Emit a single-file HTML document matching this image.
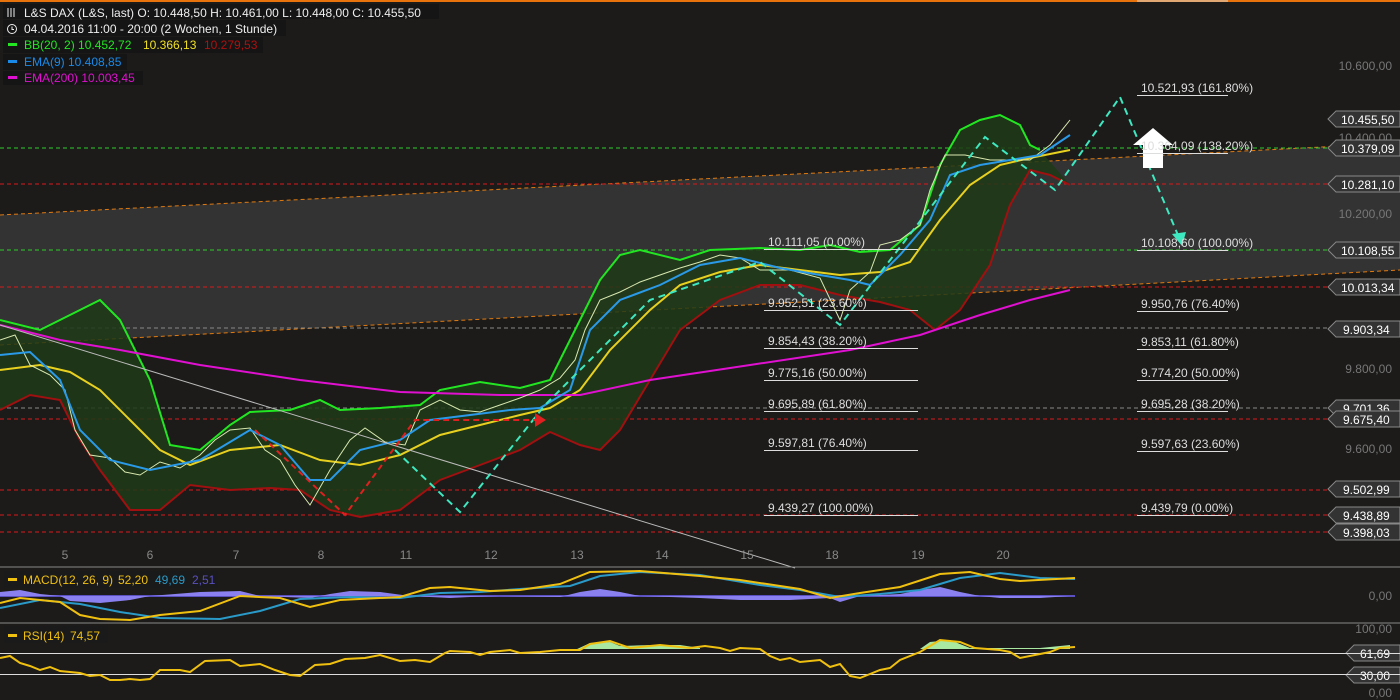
<!DOCTYPE html>
<html><head><meta charset="utf-8"><style>
body{margin:0;background:#1c1b1a;width:1400px;height:700px;overflow:hidden;font-family:"Liberation Sans",sans-serif}
svg{position:absolute;left:0;top:0}
text{font-family:"Liberation Sans",sans-serif;font-size:12px}
</style></head><body>
<svg width="1400" height="700" viewBox="0 0 1400 700">
<rect width="1400" height="700" fill="#1c1b1a"/>
<rect x="0" y="0" width="1400" height="2" fill="#e8720c"/>
<polygon points="0,215 1400,143 1400,270 0,345" fill="#333"/>
<line x1="0" y1="215" x2="1400" y2="143" stroke="#e07a10" stroke-dasharray="4,3"/>
<line x1="0" y1="345" x2="1400" y2="270" stroke="#e07a10" stroke-dasharray="4,3"/>
<g stroke-dasharray="4,3" stroke-width="1">
<line x1="0" y1="148" x2="1328" y2="148" stroke="#2ecc2e"/>
<line x1="0" y1="184" x2="1328" y2="184" stroke="#d81a1a"/>
<line x1="0" y1="250" x2="1328" y2="250" stroke="#2ecc2e"/>
<line x1="0" y1="287" x2="1328" y2="287" stroke="#d81a1a"/>
<line x1="0" y1="328" x2="1328" y2="328" stroke="#888"/>
<line x1="0" y1="408" x2="1328" y2="408" stroke="#888"/>
<line x1="0" y1="419" x2="1328" y2="419" stroke="#d81a1a"/>
<line x1="0" y1="490" x2="1328" y2="490" stroke="#d81a1a"/>
<line x1="0" y1="515" x2="1328" y2="515" stroke="#d81a1a"/>
<line x1="0" y1="532" x2="1328" y2="532" stroke="#d81a1a"/>
</g>
<polygon fill="#1f3a18" fill-opacity="0.85" points="0,320 40,330 70,315 100,300 120,320 150,380 170,445 200,450 230,425 250,412 290,410 320,400 340,410 380,408 420,405 440,390 480,382 520,388 550,380 580,320 600,280 620,255 640,250 680,260 710,250 760,248 800,250 830,245 860,252 890,250 920,225 940,165 960,130 980,120 1000,115 1020,125 1030,145 1040,150 1070,185 1050,175 1030,170 1010,205 990,265 960,310 935,330 910,310 880,302 840,295 800,285 760,285 720,300 680,330 650,380 620,430 600,450 580,445 550,432 520,450 480,465 440,480 400,510 360,517 330,510 300,490 270,488 230,490 190,485 160,510 130,510 100,470 80,440 60,400 30,395 0,410"/>
<polyline fill="none" stroke="#22e622" stroke-width="2" points="0,320 40,330 70,315 100,300 120,320 150,380 170,445 200,450 230,425 250,412 290,410 320,400 340,410 380,408 420,405 440,390 480,382 520,388 550,380 580,320 600,280 620,255 640,250 680,260 710,250 760,248 800,250 830,245 860,252 890,250 920,225 940,165 960,130 980,120 1000,115 1020,125 1030,145 1040,150"/>
<polyline fill="none" stroke="#a01010" stroke-width="2" points="0,410 30,395 60,400 80,440 100,470 130,510 160,510 190,485 230,490 270,488 300,490 330,510 360,517 400,510 440,480 480,465 520,450 550,432 580,445 600,450 620,430 650,380 680,330 720,300 760,285 800,285 840,295 880,302 910,310 935,330 960,310 990,265 1010,205 1030,170 1050,175 1070,185"/>
<polyline fill="none" stroke="#e8d020" stroke-width="2" points="0,370 40,365 70,372 100,390 130,420 160,450 190,465 230,450 280,445 320,460 360,465 400,455 440,435 480,425 520,415 550,408 580,390 610,350 650,310 680,285 720,272 760,265 800,270 840,275 880,272 910,262 940,220 970,185 1000,165 1030,158 1070,150"/>
<polyline fill="none" stroke="#e010d0" stroke-width="2" points="0,325 60,340 120,350 200,365 300,380 400,392 500,395 580,395 650,380 750,365 850,350 920,335 980,315 1030,300 1070,290"/>
<polyline fill="none" stroke="#d8e8b0" stroke-width="1" points="0,340 15,335 30,365 50,375 65,390 75,430 90,455 110,458 125,472 140,475 160,462 180,468 200,455 215,440 230,430 250,428 265,450 280,460 295,485 310,505 330,470 350,440 365,428 385,442 405,445 420,410 440,400 460,410 480,412 500,405 520,398 540,390 560,378 575,360 585,330 600,300 620,292 640,282 660,275 680,268 700,262 720,255 740,258 760,270 790,270 820,278 840,320 850,290 870,272 880,245 900,240 920,225 930,190 945,155 965,155 990,160 1010,160 1030,160 1050,145 1070,120"/>
<polyline fill="none" stroke="#2a9ae8" stroke-width="2" points="0,355 30,352 60,380 80,430 110,460 150,470 200,460 250,430 280,445 310,480 330,480 360,450 400,440 430,420 470,415 510,410 540,408 570,390 590,330 620,300 660,285 700,265 740,258 780,268 820,275 850,280 870,285 900,255 930,220 950,175 980,165 1010,160 1040,155 1070,135"/>
<line x1="0" y1="325" x2="795" y2="568" stroke="#bbb" stroke-width="1"/>
<polyline fill="none" stroke="#3ee8c0" stroke-width="2" stroke-dasharray="7,5" points="395,450 460,512 545,405 650,300 760,262 840,325 985,137 1055,190 1120,97 1180,240"/>
<polygon points="1172,234 1186,232 1182,246" fill="#3ee8c0"/>
<polyline fill="none" stroke="#e02020" stroke-width="2" stroke-dasharray="6,4" points="255,430 345,515 415,420 540,420"/>
<polygon points="535,413 546,420 535,427" fill="#e02020"/>
<polygon points="1153,128 1173,145 1163,145 1163,168 1143,168 1143,145 1133,145" fill="#fff"/>
<g fill="#ddd" font-size="12">
<text x="768" y="246">10.111,05 (0.00%)</text>
<text x="768" y="307">9.952,51 (23.60%)</text>
<text x="768" y="345">9.854,43 (38.20%)</text>
<text x="768" y="377">9.775,16 (50.00%)</text>
<text x="768" y="408">9.695,89 (61.80%)</text>
<text x="768" y="447">9.597,81 (76.40%)</text>
<text x="768" y="512">9.439,27 (100.00%)</text>
<text x="1141" y="92">10.521,93 (161.80%)</text>
<text x="1141" y="150">10.364,09 (138.20%)</text>
<text x="1141" y="247">10.108,60 (100.00%)</text>
<text x="1141" y="308">9.950,76 (76.40%)</text>
<text x="1141" y="346">9.853,11 (61.80%)</text>
<text x="1141" y="377">9.774,20 (50.00%)</text>
<text x="1141" y="408">9.695,28 (38.20%)</text>
<text x="1141" y="448">9.597,63 (23.60%)</text>
<text x="1141" y="512">9.439,79 (0.00%)</text>
</g>
<g stroke="#ddd" stroke-width="1">
<line x1="764" y1="249.5" x2="918" y2="249.5"/><line x1="764" y1="310.5" x2="918" y2="310.5"/><line x1="764" y1="348.5" x2="918" y2="348.5"/><line x1="764" y1="380.5" x2="918" y2="380.5"/><line x1="764" y1="411.5" x2="918" y2="411.5"/><line x1="764" y1="450.5" x2="918" y2="450.5"/><line x1="764" y1="515.5" x2="918" y2="515.5"/>
<line x1="1137" y1="95.5" x2="1228" y2="95.5"/><line x1="1137" y1="153.5" x2="1228" y2="153.5"/><line x1="1137" y1="250.5" x2="1228" y2="250.5"/><line x1="1137" y1="311.5" x2="1228" y2="311.5"/><line x1="1137" y1="349.5" x2="1228" y2="349.5"/><line x1="1137" y1="380.5" x2="1228" y2="380.5"/><line x1="1137" y1="411.5" x2="1228" y2="411.5"/><line x1="1137" y1="451.5" x2="1228" y2="451.5"/><line x1="1137" y1="515.5" x2="1228" y2="515.5"/>
<line x1="1137" y1="1" x2="1228" y2="1"/>
</g>
<g fill="#777" font-size="12" text-anchor="end">
<text x="1392" y="70">10.600,00</text><text x="1392" y="142">10.400,00</text><text x="1392" y="218">10.200,00</text><text x="1392" y="373">9.800,00</text><text x="1392" y="453">9.600,00</text>
<text x="1392" y="600">0,00</text><text x="1392" y="633">100,00</text><text x="1392" y="697">0,00</text>
</g>
<g font-size="13">
<g transform="translate(0,119)"><polygon points="1328,0 1336,-8 1400,-8 1400,8 1336,8" fill="#333" stroke="#888"/><text x="1341" y="5" fill="#fff">10.455,50</text></g>
<g transform="translate(0,148)"><polygon points="1328,0 1336,-8 1400,-8 1400,8 1336,8" fill="#333" stroke="#888"/><text x="1341" y="5" fill="#fff">10.379,09</text></g>
<g transform="translate(0,184)"><polygon points="1328,0 1336,-8 1400,-8 1400,8 1336,8" fill="#333" stroke="#888"/><text x="1341" y="5" fill="#fff">10.281,10</text></g>
<g transform="translate(0,250)"><polygon points="1328,0 1336,-8 1400,-8 1400,8 1336,8" fill="#333" stroke="#888"/><text x="1341" y="5" fill="#fff">10.108,55</text></g>
<g transform="translate(0,287)"><polygon points="1328,0 1336,-8 1400,-8 1400,8 1336,8" fill="#333" stroke="#888"/><text x="1341" y="5" fill="#fff">10.013,34</text></g>
<g transform="translate(0,329)"><polygon points="1328,0 1336,-8 1400,-8 1400,8 1336,8" fill="#333" stroke="#888"/><text x="1343" y="5" fill="#fff">9.903,34</text></g>
<g transform="translate(0,408)"><polygon points="1328,0 1336,-8 1400,-8 1400,8 1336,8" fill="#333" stroke="#888"/><text x="1343" y="5" fill="#fff">9.701,36</text></g>
<g transform="translate(0,419)"><polygon points="1328,0 1336,-8 1400,-8 1400,8 1336,8" fill="#333" stroke="#888"/><text x="1343" y="5" fill="#fff">9.675,40</text></g>
<g transform="translate(0,489)"><polygon points="1328,0 1336,-8 1400,-8 1400,8 1336,8" fill="#333" stroke="#888"/><text x="1343" y="5" fill="#fff">9.502,99</text></g>
<g transform="translate(0,515)"><polygon points="1328,0 1336,-8 1400,-8 1400,8 1336,8" fill="#333" stroke="#888"/><text x="1343" y="5" fill="#fff">9.438,89</text></g>
<g transform="translate(0,532)"><polygon points="1328,0 1336,-8 1400,-8 1400,8 1336,8" fill="#333" stroke="#888"/><text x="1343" y="5" fill="#fff">9.398,03</text></g>
<g transform="translate(0,653)"><polygon points="1346,0 1354,-8 1400,-8 1400,8 1354,8" fill="#333" stroke="#888"/><text x="1360" y="5" fill="#fff">61,69</text></g>
<g transform="translate(0,675)"><polygon points="1346,0 1354,-8 1400,-8 1400,8 1354,8" fill="#333" stroke="#888"/><text x="1360" y="5" fill="#fff">30,00</text></g>
</g>
<g fill="#888" font-size="12" text-anchor="middle">
<text x="65" y="559">5</text><text x="150" y="559">6</text><text x="236" y="559">7</text><text x="321" y="559">8</text><text x="406" y="559">11</text><text x="491" y="559">12</text><text x="577" y="559">13</text><text x="662" y="559">14</text><text x="747" y="559">15</text><text x="832" y="559">18</text><text x="918" y="559">19</text><text x="1003" y="559">20</text>
</g>
<line x1="0" y1="567" x2="1400" y2="567" stroke="#888"/>
<line x1="0" y1="623" x2="1400" y2="623" stroke="#888"/>
<line x1="0" y1="596" x2="1075" y2="596" stroke="#5a50c0" stroke-width="2"/>
<polygon fill="#8a80f0" points="0,592 20,590 40,594 60,596 70,601 100,603 130,600 150,596 200,592 240,591 260,596 310,598 330,594 350,591 380,592 410,596 450,598 470,597 500,596 560,597 580,592 600,589 620,592 640,596 700,598 740,600 790,600 830,598 840,602 860,596 900,594 920,590 940,587 960,592 980,596 1000,598 1040,598 1070,596 1075,596 0,596"/>
<polyline fill="none" stroke="#2a9ac8" stroke-width="2" points="0,608 40,600 80,604 120,612 160,618 220,619 260,611 300,599 350,597 400,598 440,593 480,592 520,589 570,586 600,576 640,572 700,575 760,585 800,590 840,597 880,594 920,590 960,578 1000,573 1040,578 1075,579"/>
<polyline fill="none" stroke="#f0c010" stroke-width="2" points="0,603 20,598 60,602 80,615 100,619 130,620 160,615 200,611 240,596 280,598 310,607 340,600 400,597 430,588 450,587 490,591 520,590 560,584 590,572 640,571 700,576 740,580 800,589 830,598 860,593 900,587 940,574 970,572 1000,579 1020,581 1075,578"/>
<rect x="4" y="571" width="214" height="17" fill="#1a1a1a"/>
<rect x="8" y="578" width="9" height="3" fill="#f0c010"/>
<text x="23" y="584" fill="#f0c010">MACD(12, 26, 9)</text><text x="118" y="584" fill="#f0c010">52,20</text><text x="155" y="584" fill="#2a9ac8">49,69</text><text x="192" y="584" fill="#5a50c0">2,51</text>
<line x1="0" y1="653.5" x2="1400" y2="653.5" stroke="#ddd"/>
<line x1="0" y1="674.5" x2="1400" y2="674.5" stroke="#ddd"/>
<polygon fill="#a8e8a0" points="575,650 590,643 610,642 620,646 650,645 680,645 700,648 700,649 575,649"/>
<polygon fill="#a8e8a0" points="920,649 930,642 950,640 970,648 1000,648 1040,648 1070,645 1070,649"/>
<polyline fill="none" stroke="#f0c010" stroke-width="2" points="0,658 10,656 20,663 30,666 40,670 50,667 60,671 80,673 90,676 100,675 110,680 120,680 130,679 140,680 150,679 160,670 180,670 190,672 205,661 230,660 240,666 260,664 275,670 290,675 300,676 315,665 330,664 345,659 365,658 380,655 400,661 415,660 430,662 445,653 450,651 470,652 480,655 490,652 510,650 520,653 540,652 560,650 580,650 590,644 610,641 630,648 660,645 690,648 705,646 720,648 730,651 740,648 760,649 770,656 780,660 790,658 800,662 820,660 830,667 840,664 845,670 850,676 860,678 870,674 880,670 890,668 900,660 920,652 940,640 960,642 975,648 1000,650 1010,652 1020,658 1040,654 1050,652 1060,648 1075,647"/>
<rect x="4" y="626" width="104" height="17" fill="#1a1a1a"/>
<rect x="8" y="634" width="9" height="3" fill="#f0c010"/>
<text x="23" y="640" fill="#f0c010">RSI(14)</text><text x="70" y="640" fill="#f0c010">74,57</text>
<rect x="3" y="4" width="436" height="15" fill="#151515"/>
<rect x="3" y="20" width="283" height="16" fill="#151515"/>
<rect x="3" y="37" width="260" height="16" fill="#151515"/>
<rect x="3" y="54" width="124" height="16" fill="#151515"/>
<rect x="3" y="71" width="140" height="14" fill="#151515"/>
<g font-size="12.4">
<path d="M8 8v9M11 8v9M14 8v9" stroke="#eee" stroke-width="1"/>
<text x="24" y="17" fill="#eee">L&amp;S DAX (L&amp;S, last)  O: 10.448,50  H: 10.461,00  L: 10.448,00  C: 10.455,50</text>
<circle cx="12" cy="29" r="4.5" fill="none" stroke="#eee"/><path d="M12 26.5v3h2" fill="none" stroke="#eee"/>
<text x="24" y="33" fill="#eee">04.04.2016 11:00 - 20:00 (2 Wochen, 1 Stunde)</text>
<rect x="8" y="43" width="9" height="3" fill="#22e622"/>
<text x="24" y="49" fill="#22e622">BB(20, 2)  10.452,72</text><text x="143" y="49" fill="#f0e020">10.366,13</text><text x="204" y="49" fill="#b01010">10.279,53</text>
<rect x="8" y="60" width="9" height="3" fill="#1a8ae8"/>
<text x="24" y="66" fill="#1a8ae8">EMA(9)  10.408,85</text>
<rect x="8" y="76" width="9" height="3" fill="#e010d0"/>
<text x="24" y="82" fill="#e010d0">EMA(200)  10.003,45</text>
</g>
</svg>
</body></html>
